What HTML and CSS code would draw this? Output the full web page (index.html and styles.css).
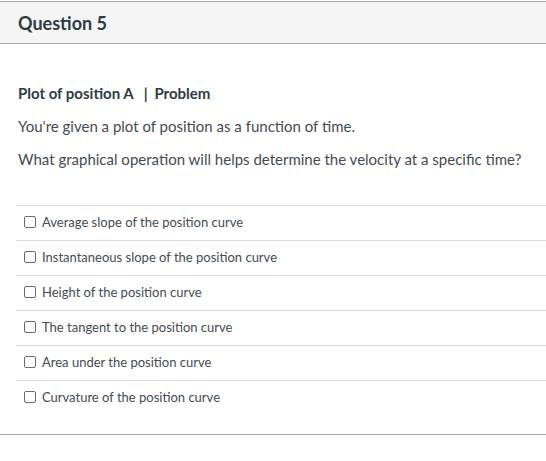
FILE: index.html
```html
<!DOCTYPE html>
<html>
<head>
<meta charset="utf-8">
<link rel="stylesheet" href="styles.css">
</head>
<body>
<div class="question">
  <div class="q-header">Question 5</div>
  <div class="q-body">
    <p class="q-title">Plot of position A <span class="sep">|</span> Problem</p>
    <p class="q-text">You're given a plot of position as a function of time.</p>
    <p class="q-text">What graphical operation will helps determine the velocity at a specific time?</p>
    <ul class="answers">
      <li class="answer"><span class="box"></span>Average slope of the position curve</li>
      <li class="answer"><span class="box"></span>Instantaneous slope of the position curve</li>
      <li class="answer"><span class="box"></span>Height of the position curve</li>
      <li class="answer"><span class="box"></span>The tangent to the position curve</li>
      <li class="answer"><span class="box"></span>Area under the position curve</li>
      <li class="answer"><span class="box"></span>Curvature of the position curve</li>
    </ul>
  </div>
  <div class="q-footer"></div>
</div>
</body>
</html>
```
FILE: styles.css
```css
html, body {
  margin: 0;
  padding: 0;
  background: #fff;
}
body {
  font-family: Lato, "Open Sans", sans-serif;
  color: #2d3b45;
}
.question {
  padding-top: 1px;
}
.q-header {
  height: 41px;
  display: flex;
  align-items: center;
  padding-left: 18px;
  background: #f5f5f5;
  border-top: 1px solid #a9a9a9;
  border-bottom: 1px solid #a9a9a9;
  font-size: 18px;
  font-weight: 700;
  color: #2d3b45;
}
.q-body {
  padding: 0 0 0 18px;
}
.q-title {
  margin: 40px 0 0 0;
  font-size: 15px;
  font-weight: 700;
  line-height: 18px;
  color: #2d3b45;
}
.sep {
  margin: 0 3px 0 7px;
}
.q-text {
  margin: 15px 0 0 0;
  font-size: 15px;
  line-height: 18px;
  color: #444b52;
}
.answers {
  list-style: none;
  margin: 37px 0 0 -2px;
  padding: 0;
}
.answer {
  height: 32px;
  padding-bottom: 2px;
  border-top: 1px solid #dcdcdc;
  display: flex;
  align-items: center;
  padding-left: 8px;
  font-size: 13px;
  color: #444b52;
}
.box {
  width: 10px;
  height: 10px;
  border: 1px solid #6b6b6b;
  border-radius: 2px;
  margin-right: 6px;
  flex: none;
}
.q-footer {
  margin-top: 19px;
  border-top: 1px solid #a9a9a9;
}
```
